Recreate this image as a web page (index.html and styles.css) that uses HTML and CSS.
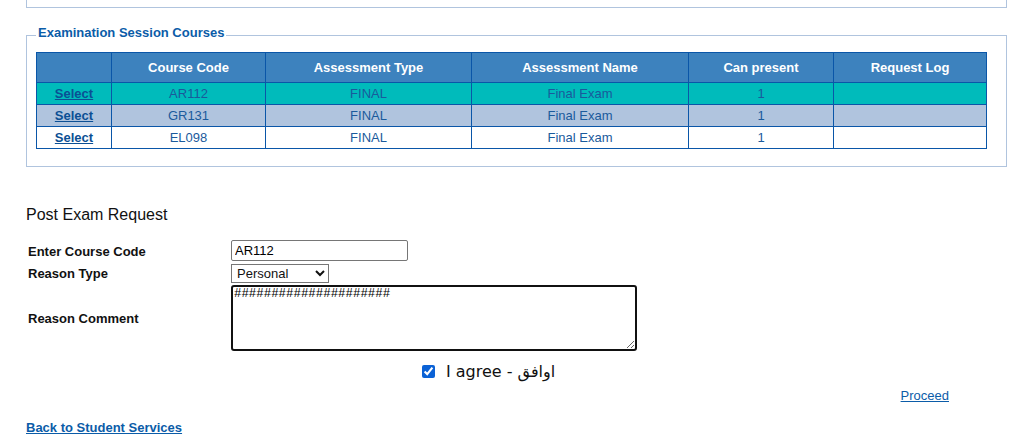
FILE: index.html
```html
<!DOCTYPE html>
<html lang="en">
<head>
  <meta charset="UTF-8">
  <meta name="viewport" content="width=device-width, initial-scale=1.0">
  <title>Post Exam Request</title>
  <link rel="stylesheet" href="styles.css">
</head>
<body>

  <div class="page">
    <!-- Previous panel (scrolled off the top) -->
    <div class="top-panel"></div>

    <!-- Examination Session Courses -->
    <fieldset class="courses">
      <legend>Examination Session Courses</legend>
      <table class="grid">
        <colgroup>
          <col style="width:75px">
          <col style="width:154px">
          <col style="width:206px">
          <col style="width:217px">
          <col style="width:145px">
          <col style="width:153px">
        </colgroup>
        <tr class="head">
          <th>&nbsp;</th>
          <th>Course Code</th>
          <th>Assessment Type</th>
          <th>Assessment Name</th>
          <th>Can present</th>
          <th>Request Log</th>
        </tr>
        <tr class="row-selected">
          <td><a href="#">Select</a></td>
          <td>AR112</td>
          <td>FINAL</td>
          <td>Final Exam</td>
          <td>1</td>
          <td>&nbsp;</td>
        </tr>
        <tr class="row-alt">
          <td><a href="#">Select</a></td>
          <td>GR131</td>
          <td>FINAL</td>
          <td>Final Exam</td>
          <td>1</td>
          <td>&nbsp;</td>
        </tr>
        <tr class="row">
          <td><a href="#">Select</a></td>
          <td>EL098</td>
          <td>FINAL</td>
          <td>Final Exam</td>
          <td>1</td>
          <td>&nbsp;</td>
        </tr>
      </table>
    </fieldset>

    <!-- Post Exam Request -->
    <h2 class="section-title">Post Exam Request</h2>

    <table class="request">
      <tr>
        <td class="label">Enter Course Code</td>
        <td><input type="text" class="code-input" value="AR112"></td>
      </tr>
      <tr>
        <td class="label">Reason Type</td>
        <td>
          <select class="reason-select">
            <option selected>Personal</option>
            <option>Medical</option>
            <option>Other</option>
          </select>
        </td>
      </tr>
      <tr>
        <td class="label">Reason Comment</td>
        <td><textarea class="comment">#####################</textarea></td>
      </tr>
      <tr>
        <td colspan="2" class="agree">
          <label><input type="checkbox" checked> I agree - <span dir="rtl">اوافق</span></label>
        </td>
      </tr>
      <tr>
        <td colspan="2" class="proceed"><a href="#">Proceed</a></td>
      </tr>
    </table>

    <a href="#" class="back-link">Back to Student Services</a>
  </div>

</body>
</html>
```

FILE: styles.css
```css
/*--------------------------------------------------------------
# Global Styles
--------------------------------------------------------------*/
* {
  box-sizing: border-box;
}

body {
  margin: 0;
  font-family: "Liberation Sans", Arial, sans-serif;
  font-size: 13px;
  color: #111;
  background: #fff;
}

a {
  color: #0b5ca8;
}

.page {
  width: 981px;
  margin-left: 26px;
}

/*--------------------------------------------------------------
# Panels
--------------------------------------------------------------*/
.top-panel {
  height: 8px;
  border: 1px solid #b0c4de;
  border-top: none;
}

.courses {
  margin: 17px 0 0;
  padding: 6px 19px 17px 9px;
  border: 1px solid #b0c4de;
}

.courses legend {
  margin-left: 0;
  padding: 0 2px 6px;
  font-size: 13px;
  font-weight: bold;
  color: #0b5ca8;
}

/*--------------------------------------------------------------
# Courses Grid
--------------------------------------------------------------*/
.grid {
  width: 950px;
  table-layout: fixed;
  border-collapse: collapse;
}

.grid th,
.grid td {
  border: 1px solid #0a56a8;
  text-align: center;
  padding: 0 4px;
}

.grid th {
  height: 30px;
  background: #3d82be;
  color: #fff;
  font-weight: bold;
}

.grid td {
  height: 22px;
  color: #1a5a9c;
}

.grid td a {
  font-weight: bold;
  color: #0b4f94;
}

.row-selected td {
  background: #00bbbb;
}

.row-alt td {
  background: #b0c4de;
}

.row td {
  background: #fff;
}

/*--------------------------------------------------------------
# Request Form
--------------------------------------------------------------*/
.section-title {
  margin: 39px 0 15px;
  font-size: 16px;
  font-weight: normal;
  color: #111;
}

.request {
  width: 925px;
  border-collapse: collapse;
}

.request td {
  padding: 1px 2px;
}

.request .label {
  width: 203px;
  font-weight: bold;
}

.code-input {
  width: 177px;
  height: 21px;
  margin-bottom: 1px;
  padding: 1px 3px;
  border: 1px solid #767676;
  border-radius: 2px;
  font-family: "Liberation Sans", Arial, sans-serif;
  font-size: 13px;
}

.reason-select {
  width: 98px;
  height: 19px;
  padding: 0 1px;
  border: 1px solid #767676;
  border-radius: 0;
  font-family: "Liberation Sans", Arial, sans-serif;
  font-size: 13px;
  color: #111;
  background: #fff;
}

.comment {
  display: block;
  width: 406px;
  height: 66px;
  padding: 0 1px;
  border: 2px solid #111;
  border-radius: 3px;
  font-family: "Liberation Mono", monospace;
  font-size: 12.4px;
  resize: both;
}

.agree {
  padding-top: 10px !important;
  text-align: center;
  font-family: "DejaVu Sans", sans-serif;
  font-size: 16px;
}

.agree input {
  width: 13px;
  height: 13px;
  margin: 0 6px 0 0;
  vertical-align: -1px;
  accent-color: #0b62d6;
}

.proceed {
  padding-top: 6px !important;
  text-align: right;
}

.back-link {
  display: inline-block;
  margin-top: 16px;
  font-weight: bold;
  color: #0b5ca8;
}
```
